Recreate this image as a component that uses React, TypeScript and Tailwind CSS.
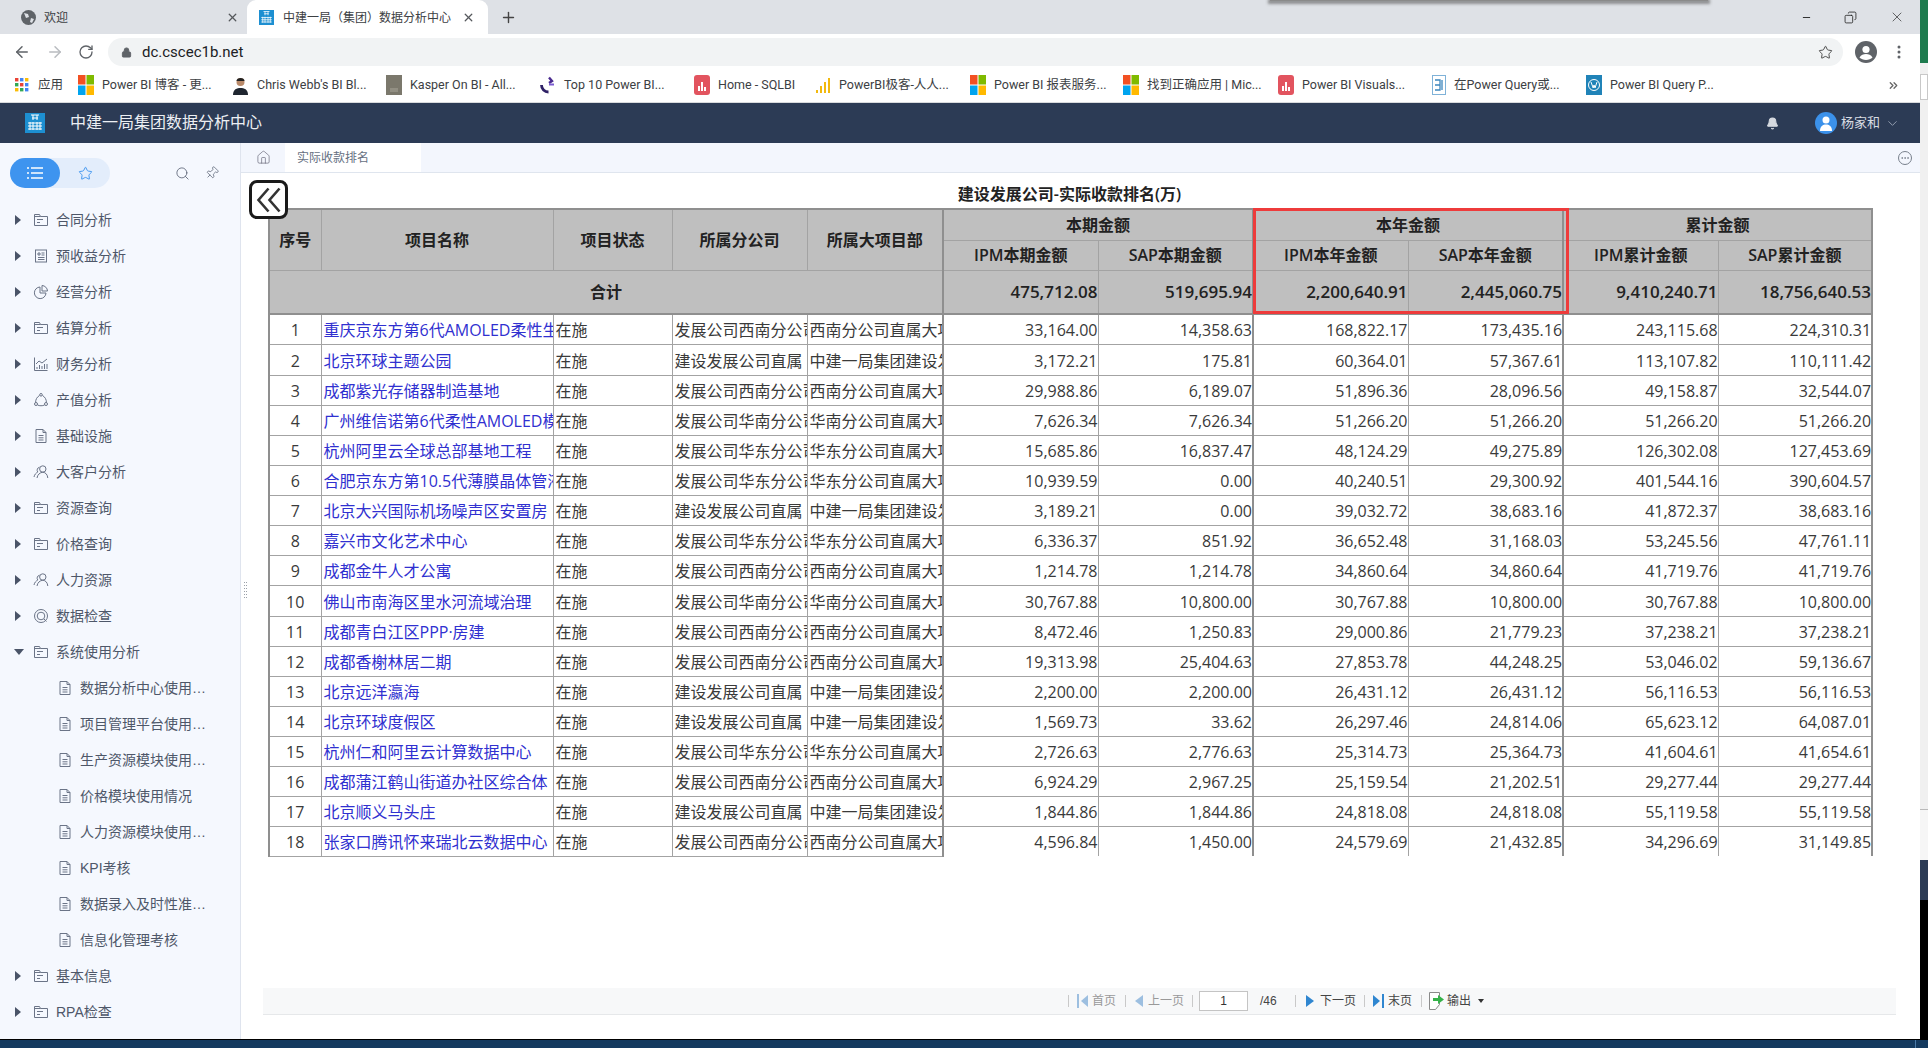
import React from 'react';
import { ArrowLeft, ArrowRight, RotateCw, Lock, Star, X, Plus, Minus, Bell, ChevronDown, Home, Search, Pin, ChevronsRight, Ellipsis, Copy } from 'lucide-react';

const Logo = ({ s = 16 }: { s?: number }) => (
  <svg width={s} height={s} viewBox="0 0 20 20" className="shrink-0">
    <rect width="20" height="20" fill="#1d8fd1" />
    <path d="M6 2h8M7 5h6M8 2v5M12 2v5M3 10h14M3 13h14M3 16h14M5 9v8M8 9v8M12 9v8M15 9v8" stroke="#fff" strokeWidth="1" fill="none" />
  </svg>
);
const Ms = () => (
  <svg width="16" height="20" viewBox="0 0 16 20" className="shrink-0">
    <rect width="7.5" height="9.5" fill="#f25022" />
    <rect x="8.5" width="7.5" height="9.5" fill="#7fba00" />
    <rect y="10.5" width="7.5" height="9.5" fill="#00a4ef" />
    <rect x="8.5" y="10.5" width="7.5" height="9.5" fill="#ffb900" />
  </svg>
);
const Red = () => (
  <svg width="16" height="20" viewBox="0 0 16 20" className="shrink-0">
    <rect width="16" height="20" rx="3" fill="#e2545f" />
    <path d="M4 11h2v5H4zM7 7h2v9H7zM10 12h2v4h-2z" fill="#fff" />
  </svg>
);
const Apps = () => (
  <svg width="14" height="14" viewBox="0 0 14 14" className="shrink-0">
    {[0, 5, 10].map((y, j) =>
      [0, 5, 10].map((x, i) => (
        <rect key={`${i}${j}`} x={x} y={y} width="3.4" height="3.4" fill={['#ea4335', '#4285f4', '#fbbc05', '#34a853', '#ea4335', '#4285f4', '#fbbc05', '#34a853', '#4285f4'][i + j * 3]} />
      ))
    )}
  </svg>
);
const Person = () => (
  <svg width="17" height="20" viewBox="0 0 17 20" className="shrink-0">
    <circle cx="8.5" cy="7" r="4" fill="#b98a6a" />
    <path d="M4.5 6c0-4 8-4 8 0z" fill="#222" />
    <path d="M1 20c0-6 4-7 7.500-7s7.500 1 7.500 7z" fill="#1f2630" />
  </svg>
);
const Kasper = () => (
  <svg width="16" height="20" viewBox="0 0 16 20" className="shrink-0">
    <rect width="16" height="20" fill="#7b786c" />
    <path d="M4 14h8M4 16h8" stroke="#aaa69a" />
  </svg>
);
const Top10 = () => (
  <svg width="16" height="18" viewBox="0 0 16 18" className="shrink-0" fill="none">
    <path d="M9 1.500 12 5 9 7" stroke="#4a2b8f" strokeWidth="2.400" />
    <path d="M1.500 9c0 4 3 7 7 7" stroke="#2f2166" strokeWidth="2.800" />
    <path d="M14 8.500h-5" stroke="#7a5bd0" strokeWidth="2" />
  </svg>
);
const Pbi = () => (
  <svg width="15" height="16" viewBox="0 0 15 16" className="shrink-0">
    <path d="M0 13h2v3H0zM4 9h2v7H4zM8 5h2v11H8zM12 1h2v15h-2z" fill="#f2b90f" />
  </svg>
);
const E3 = () => (
  <svg width="14" height="20" viewBox="0 0 14 20" className="shrink-0" fill="none">
    <rect x=".5" y=".5" width="13" height="19" fill="#fff" stroke="#7fb2d8" />
    <path d="M3 5h5v10H3M3 10h5M10 5v10" stroke="#3c86bd" strokeWidth="1.300" />
  </svg>
);
const Wp = () => (
  <svg width="16" height="20" viewBox="0 0 16 20" className="shrink-0">
    <rect width="16" height="20" fill="#2083b8" />
    <circle cx="8" cy="10" r="5.500" fill="none" stroke="#fff" />
    <path d="M5 7l2.200 6L8 10l1 3 2-6" fill="none" stroke="#fff" />
  </svg>
);

const marks = [
  { w: 'w-[63px]', icon: <Apps />, label: '应用', gap: 'gap-[9px]' },
  { w: 'w-[154px]', icon: <Ms />, label: 'Power BI 博客 - 更...' },
  { w: 'w-[154px]', icon: <Person />, label: "Chris Webb's BI Bl..." },
  { w: 'w-[154px]', icon: <Kasper />, label: 'Kasper On BI - All...' },
  { w: 'w-[154px]', icon: <Top10 />, label: 'Top 10 Power BI...' },
  { w: 'w-[122px]', icon: <Red />, label: 'Home - SQLBI' },
  { w: 'w-[154px]', icon: <Pbi />, label: 'PowerBI极客-人人...' },
  { w: 'w-[153px]', icon: <Ms />, label: 'Power BI 报表服务...' },
  { w: 'w-[155px]', icon: <Ms />, label: '找到正确应用 | Mic...' },
  { w: 'w-[154px]', icon: <Red />, label: 'Power BI Visuals...' },
  { w: 'w-[154px]', icon: <E3 />, label: '在Power Query或...' },
  { w: 'w-[154px]', icon: <Wp />, label: 'Power BI Query P...' },
];

const S = { width: 16, height: 16, viewBox: '0 0 16 16', fill: 'none', stroke: '#6b7487', strokeWidth: 1, className: 'shrink-0' };
const Folder = () => (
  <svg {...S}><path d="M1.500 13.500v-11h5l1 2h7v9z M1.500 4.500h6" /><path d="M4 7.500h6M4 10.500h3" /></svg>
);
const Report = () => (
  <svg {...S}><rect x="2.500" y="2" width="11" height="12" /><path d="M5 5h2v2H5zM8.500 5h3M8.500 7h3M5 9.500h6.500M5 11.500h6.500" /></svg>
);
const PieI = () => (
  <svg {...S}><path d="M7 3a5.800 5.800 0 1 0 6 6H7z" /><path d="M9 1.500a5.800 5.800 0 0 1 5.500 5.500H9z" /></svg>
);
const ChartI = () => (
  <svg {...S}><path d="M1.500 1.500v13h13" /><path d="M3 8l3-3 3 2 5-4M4 13v-2M6.500 13v-4M9 13v-3M11.500 13v-5M14 13V8" /></svg>
);
const Value = () => (
  <svg {...S}><circle cx="8" cy="2.800" r="1.300" /><circle cx="3" cy="12" r="1.500" /><circle cx="13" cy="12" r="1.500" /><path d="M6.500 3.500C4 5 2.500 7.500 2.600 10.500M9.500 3.500c2.500 1.500 4 4 3.900 7M4.500 13c2 1 5 1 7 0" /></svg>
);
const Doc = () => (
  <svg {...S}><path d="M3 1.500h7l3 3v10H3zM10 1.500v3h3" /><path d="M5.500 7.500h5M5.500 9.800h5M5.500 12h5" /></svg>
);
const Users = () => (
  <svg {...S}><circle cx="9.800" cy="5" r="3.200" /><path d="M4 14c.5-3.500 3-5.500 5.800-5.800 2.800.3 4.700 2.300 5 5.800" /><path d="M6.500 3.200A3 3 0 0 0 4.800 8C3 9 1.500 10.500 1 13" /></svg>
);
const Check = () => (
  <svg {...S}><circle cx="8" cy="8" r="6.500" /><circle cx="8" cy="8" r="3.800" /><path d="M11 11l2.500 2.500" /></svg>
);

const TriR = () => <span className="w-0 h-0 border-y-[5px] border-y-transparent border-l-[6px] border-l-[#4a5468] shrink-0" />;
const TriD = () => <span className="w-0 h-0 border-x-[5px] border-x-transparent border-t-[6px] border-t-[#4a5468] shrink-0 -ml-[1px]" />;

const topMenu: [React.ReactNode, string][] = [
  [<Folder />, '合同分析'], [<Report />, '预收益分析'], [<PieI />, '经营分析'], [<Folder />, '结算分析'],
  [<ChartI />, '财务分析'], [<Value />, '产值分析'], [<Doc />, '基础设施'], [<Users />, '大客户分析'],
  [<Folder />, '资源查询'], [<Folder />, '价格查询'], [<Users />, '人力资源'], [<Check />, '数据检查'],
];
const kids = ['数据分析中心使用情况', '项目管理平台使用情况', '生产资源模块使用情况', '价格模块使用情况', '人力资源模块使用情况', 'KPI考核', '数据录入及时性准确性', '信息化管理考核'];

const MenuRow = ({ open, icon, label }: { open?: boolean; icon: React.ReactNode; label: string }) => (
  <div className="h-9 flex items-center text-[14px] text-[#4e5769]">
    <span className="w-[33px] pl-[15px] flex items-center">{open ? <TriD /> : <TriR />}</span>
    {icon}
    <span className="ml-[7px]">{label}</span>
  </div>
);

const W = '发展公司西南分公司', WD = '西南分公司直属大项目部';
const E = '发展公司华东分公司', ED = '华东分公司直属大项目部';
const N = '发展公司华南分公司', ND = '华南分公司直属大项目部';
const B = '建设发展公司直属', BD = '中建一局集团建设发展';
const rows: string[][] = [
  ['重庆京东方第6代AMOLED柔性生产线', W, WD, '33,164.00', '14,358.63', '168,822.17', '173,435.16', '243,115.68', '224,310.31'],
  ['北京环球主题公园', B, BD, '3,172.21', '175.81', '60,364.01', '57,367.61', '113,107.82', '110,111.42'],
  ['成都紫光存储器制造基地', W, WD, '29,988.86', '6,189.07', '51,896.36', '28,096.56', '49,158.87', '32,544.07'],
  ['广州维信诺第6代柔性AMOLED模组', N, ND, '7,626.34', '7,626.34', '51,266.20', '51,266.20', '51,266.20', '51,266.20'],
  ['杭州阿里云全球总部基地工程', E, ED, '15,685.86', '16,837.47', '48,124.29', '49,275.89', '126,302.08', '127,453.69'],
  ['合肥京东方第10.5代薄膜晶体管液晶', E, ED, '10,939.59', '0.00', '40,240.51', '29,300.92', '401,544.16', '390,604.57'],
  ['北京大兴国际机场噪声区安置房', B, BD, '3,189.21', '0.00', '39,032.72', '38,683.16', '41,872.37', '38,683.16'],
  ['嘉兴市文化艺术中心', E, ED, '6,336.37', '851.92', '36,652.48', '31,168.03', '53,245.56', '47,761.11'],
  ['成都金牛人才公寓', W, WD, '1,214.78', '1,214.78', '34,860.64', '34,860.64', '41,719.76', '41,719.76'],
  ['佛山市南海区里水河流域治理', N, ND, '30,767.88', '10,800.00', '30,767.88', '10,800.00', '30,767.88', '10,800.00'],
  ['成都青白江区PPP·房建', W, WD, '8,472.46', '1,250.83', '29,000.86', '21,779.23', '37,238.21', '37,238.21'],
  ['成都香榭林居二期', W, WD, '19,313.98', '25,404.63', '27,853.78', '44,248.25', '53,046.02', '59,136.67'],
  ['北京远洋瀛海', B, BD, '2,200.00', '2,200.00', '26,431.12', '26,431.12', '56,116.53', '56,116.53'],
  ['北京环球度假区', B, BD, '1,569.73', '33.62', '26,297.46', '24,814.06', '65,623.12', '64,087.01'],
  ['杭州仁和阿里云计算数据中心', E, ED, '2,726.63', '2,776.63', '25,314.73', '25,364.73', '41,604.61', '41,654.61'],
  ['成都蒲江鹤山街道办社区综合体', W, WD, '6,924.29', '2,967.25', '25,159.54', '21,202.51', '29,277.44', '29,277.44'],
  ['北京顺义马头庄', B, BD, '1,844.86', '1,844.86', '24,818.08', '24,818.08', '55,119.58', '55,119.58'],
  ['张家口腾讯怀来瑞北云数据中心', W, WD, '4,596.84', '1,450.00', '24,579.69', '21,432.85', '34,296.69', '31,149.85'],
];

const heavy = 'border-l-2 border-l-[#8f8f8f]';
const line = 'border border-[#a3a3a3]';
const th = `${line} p-0 font-semibold text-[16px] text-[#222] text-center align-middle`;
const td = `${line} p-0 pt-[2px] overflow-hidden whitespace-nowrap`;
const num = `${td} text-right border-b-0`;

const Sep = ({ className = '' }: { className?: string }) => <span className={`w-px h-[12px] bg-[#c9c9c9] ${className}`} />;
const First = ({ dim }: { dim?: boolean }) => (
  <svg width="11" height="14" viewBox="0 0 11 14"><path d="M0 0h2v14H0z" fill={dim ? '#9dbfe0' : '#2f86d0'} /><path d="M11 1v12L4 7z" fill={dim ? '#9dbfe0' : '#2f86d0'} /></svg>
);
const Prev = () => <svg width="8" height="14" viewBox="0 0 8 14"><path d="M8 1v12L0 7z" fill="#9dbfe0" /></svg>;
const Next = () => <svg width="8" height="14" viewBox="0 0 8 14"><path d="M0 1v12l8-6z" fill="#2f86d0" /></svg>;
const Last = () => <svg width="11" height="14" viewBox="0 0 11 14"><path d="M9 0h2v14H9z" fill="#2f86d0" /><path d="M0 1v12l7-6z" fill="#2f86d0" /></svg>;
const Export = () => (
  <svg width="16" height="18" viewBox="0 0 16 18" fill="none"><path d="M.5.500h10v12l-4 5h-6z" fill="#fff" stroke="#8a8a8a" /><path d="M4 6h5V3l6 4.500L9 12V9H4z" fill="#35b24a" /></svg>
);

export default function App() {
  return (
    <div className="w-[1928px] h-[1048px] flex flex-col overflow-hidden bg-white [font-family:'Liberation_Sans','Noto_Sans_CJK_SC',sans-serif]">
      <div className="flex h-[1039px]">
        <div className="w-[1920px] flex flex-col">
          {/* tab strip */}
          <div className="h-[34px] bg-[#dee1e6] flex items-end relative text-[12px] text-[#3c4043]">
            <div className="w-[247px] h-[34px] flex items-center pl-[21px] pt-[1px]">
              <svg width="15" height="15" viewBox="0 0 15 15"><circle cx="7.500" cy="7.500" r="7.500" fill="#5f6368" /><path d="M3 3l4 1 1 3-3 1zM10 8l3 1-2 4-2-1z" fill="#dee1e6" /></svg>
              <span className="ml-[8px]">欢迎</span>
              <X size={13} strokeWidth={2.4} className="ml-auto mr-[8px] text-[#55585c]" />
            </div>
            <div className="w-[241px] h-[34px] bg-white rounded-t-[9px] flex items-center pl-[12px] pt-[1px]">
              <Logo s={15} />
              <span className="ml-[9px] whitespace-nowrap">中建一局（集团）数据分析中心</span>
              <X size={13} strokeWidth={2.4} className="ml-auto mr-[13px] text-[#55585c]" />
            </div>
            <div className="h-[34px] flex items-center ml-[12px]"><Plus size={17} strokeWidth={2} className="text-[#444]" /></div>
            <div className="ml-auto h-[34px] flex items-center pr-[15px] gap-[32px]">
              <Minus size={11} className="text-[#222]" />
              <Copy size={13} className="text-[#222] -scale-x-100" strokeWidth={1.5} />
              <X size={16} strokeWidth={1} className="text-[#222]" />
            </div>
            <div className="absolute left-[1270px] top-0 w-[438px] h-[1px] shadow-[0_1px_3px_2px_rgba(90,90,90,0.6)] bg-[#8a8a8a]" />
          </div>
          {/* toolbar */}
          <div className="h-[32px] flex items-end bg-white">
            <div className="w-[108px] h-[28px] flex items-center pl-[13px] gap-[10px] text-[#5f6368]">
              <ArrowLeft size={18} strokeWidth={2} />
              <ArrowRight size={18} strokeWidth={2} className="text-[#b9bcc0] ml-[5px]" />
              <RotateCw size={16} strokeWidth={2} className="ml-[4px]" />
            </div>
            <div className="w-[1735px] h-[28px] rounded-full bg-[#f1f3f4] flex items-center pl-[13px] pr-[10px]">
              <Lock size={11} fill="#5f6368" className="text-[#5f6368]" />
              <span className="ml-[10px] text-[15px] text-[#202124] [font-family:'Roboto',sans-serif]">dc.cscec1b.net</span>
              <Star size={15} strokeWidth={1.5} className="ml-auto text-[#444]" />
            </div>
            <div className="flex-1 h-[28px] flex items-center pl-[12px]">
              <svg width="22" height="22" viewBox="0 0 22 22" className="shrink-0"><circle cx="11" cy="11" r="11" fill="#5f6368" /><circle cx="11" cy="8.500" r="3.600" fill="#fff" /><path d="M4.500 16.500c1.500-3 4-3.500 6.500-3.500s5 .5 6.500 3.500c-3 3.300-10 3.300-13 0z" fill="#fff" /></svg>
              <svg width="4" height="14" viewBox="0 0 4 14" className="ml-[20px] shrink-0"><circle cx="2" cy="2" r="1.500" fill="#5f6368" /><circle cx="2" cy="7" r="1.500" fill="#5f6368" /><circle cx="2" cy="12" r="1.500" fill="#5f6368" /></svg>
            </div>
          </div>
          {/* bookmarks */}
          <div className="h-[37px] pt-[2px] border-b border-[#d8dadd] flex items-center pl-[15px] text-[12.500px] text-[#3c4043] bg-white [font-family:'Roboto','Noto_Sans_CJK_SC',sans-serif]">
            {marks.map((m) => (
              <div key={m.label + m.w} className={`${m.w} flex items-center ${m.gap ?? 'gap-[8px]'} whitespace-nowrap overflow-hidden`}>
                {m.icon}
                <span>{m.label}</span>
              </div>
            ))}
            <ChevronsRight size={13} strokeWidth={2.4} className="ml-auto mr-[20px] text-[#666]" />
          </div>
          {/* app header */}
          <div className="h-[40px] bg-[#2c3b55] flex items-center pl-[25px] pr-[20px] text-[#eceff3]">
            <Logo s={20} />
            <span className="ml-[25px] text-[16px]">中建一局集团数据分析中心</span>
            <Bell size={13} fill="#d5d9df" className="ml-auto text-[#d5d9df]" />
            <span className="ml-[36px] w-[22px] h-[22px] rounded-full bg-[#3b91ea] flex items-center justify-center overflow-hidden">
              <svg width="14" height="16" viewBox="0 0 14 16"><circle cx="7" cy="5" r="3.500" fill="#fff" /><path d="M1 16c0-5 3-6.500 6-6.500s6 1.500 6 6.500z" fill="#fff" /></svg>
            </span>
            <span className="ml-[4px] text-[13px] text-[#d7dbe2]">杨家和</span>
            <ChevronDown size={15} strokeWidth={1.5} className="ml-[5px] text-[#98a2b3]" />
          </div>
          {/* body */}
          <div className="flex-1 flex min-h-0">
            <aside className="w-[241px] shrink-0 bg-[#f5f8fe] border-r border-[#dfe4ee] pt-[15px]">
              <div className="h-[30px] flex items-center pl-[10px]">
                <div className="w-[100px] h-[30px] rounded-full bg-[#e3edfb] flex">
                  <span className="w-[50px] h-[30px] rounded-full bg-[#3e94ef] flex items-center justify-center">
                    <svg width="16" height="12" viewBox="0 0 16 12" stroke="#fff" strokeWidth="1.300"><path d="M0 1h2M4 1h12M0 6h2M4 6h12M0 11h2M4 11h12" /></svg>
                  </span>
                  <span className="w-[50px] flex items-center justify-center">
                    <Star size={15} strokeWidth={1.500} className="text-[#3e94ef]" />
                  </span>
                </div>
                <Search size={15} strokeWidth={1.300} className="ml-[65px] text-[#555e70]" />
                <Pin size={14} strokeWidth={1.200} className="ml-[15px] rotate-45 text-[#555e70]" />
              </div>
              <div className="mt-[14px]">
                {topMenu.map(([i, l]) => <MenuRow key={l} icon={i} label={l} />)}
                <MenuRow open icon={<Folder />} label="系统使用分析" />
                {kids.map((k) => (
                  <div key={k} className="h-9 flex items-center pl-[57px] text-[14px] text-[#4e5769]">
                    <Doc />
                    <span className="ml-[7px] w-[128px] truncate">{k}</span>
                  </div>
                ))}
                <MenuRow icon={<Folder />} label="基本信息" />
                <MenuRow icon={<Folder />} label="RPA检查" />
              </div>
            </aside>
            <main className="flex-1 flex flex-col relative min-w-0">
              <div className="h-[30px] shrink-0 bg-[#f3f6fd] border-b border-[#dfe5ee] flex items-stretch text-[12px] text-[#66707f]">
                <div className="w-[44px] flex items-center justify-center"><Home size={15} strokeWidth={1.1} className="text-[#667]" /></div>
                <div className="w-[136px] bg-white flex items-center pl-[12px]">实际收款排名</div>
                <div className="ml-auto mr-[8px] flex items-center">
                  <span className="w-[14px] h-[14px] rounded-full border border-[#78808c] flex items-center justify-center"><Ellipsis size={10} className="text-[#78808c]" /></span>
                </div>
              </div>
              <div className="pl-[27px] [font-family:'Open_Sans','Noto_Sans_CJK_SC',sans-serif]">
                <div className="w-[1603px] h-[35px] pt-[6px] flex items-center justify-center text-[16px] font-semibold text-[#222]">建设发展公司-实际收款排名(万)</div>
                <div className="relative w-[1603px]">
                  <table className="table-fixed border-collapse w-[1603px] text-[16px] text-[#3a3a3a] border-t-2 border-r-2 border-t-[#8f8f8f] border-r-[#8f8f8f]">
                    <colgroup>
                      <col className="w-[52px]" /><col className="w-[232px]" /><col className="w-[119px]" /><col className="w-[135px]" /><col className="w-[136px]" />
                      <col className="w-[155px]" /><col className="w-[155px]" /><col className="w-[155px]" /><col className="w-[155px]" /><col className="w-[155px]" /><col className="w-[154px]" />
                    </colgroup>
                    <thead className="bg-[#bfbfbf]">
                      <tr className="h-[31px]">
                        <th rowSpan={2} className={`${th} ${heavy}`}>序号</th>
                        <th rowSpan={2} className={th}>项目名称</th>
                        <th rowSpan={2} className={th}>项目状态</th>
                        <th rowSpan={2} className={th}>所属分公司</th>
                        <th rowSpan={2} className={th}>所属大项目部</th>
                        <th colSpan={2} className={`${th} ${heavy}`}>本期金额</th>
                        <th colSpan={2} className={`${th} ${heavy}`}>本年金额</th>
                        <th colSpan={2} className={`${th} ${heavy}`}>累计金额</th>
                      </tr>
                      <tr className="h-[30px]">
                        <th className={`${th} ${heavy}`}>IPM本期金额</th>
                        <th className={th}>SAP本期金额</th>
                        <th className={`${th} ${heavy}`}>IPM本年金额</th>
                        <th className={th}>SAP本年金额</th>
                        <th className={`${th} ${heavy}`}>IPM累计金额</th>
                        <th className={th}>SAP累计金额</th>
                      </tr>
                      <tr className="h-[44px]">
                        <th colSpan={5} className={`${th} font-bold ${heavy} border-b-2 border-b-[#8f8f8f]`}>合计</th>
                        {['475,712.08', '519,695.94', '2,200,640.91', '2,445,060.75', '9,410,240.71', '18,756,640.53'].map((v, i) => (
                          <th key={v} className={`${th} font-bold text-[17px]! text-right! border-b-2 border-b-[#8f8f8f] ${i % 2 === 0 ? heavy : ''}`}>{v}</th>
                        ))}
                      </tr>
                    </thead>
                    <tbody>
                      {rows.map((r, i) => (
                        <tr key={i} className={i === 1 || i === 9 ? 'h-[31px]' : 'h-[30px]'}>
                          <td className={`${td} ${heavy} text-center`}>{i + 1}</td>
                          <td className={`${td} pl-[2px] text-[#3030d0]`}>{r[0]}</td>
                          <td className={`${td} pl-[2px]`}>在施</td>
                          <td className={`${td} pl-[2px]`}>{r[1]}</td>
                          <td className={`${td} pl-[2px]`}>{r[2]}</td>
                          {r.slice(3).map((v, j) => (
                            <td key={j} className={`${num} ${j % 2 === 0 ? heavy : ''}`}>{v}</td>
                          ))}
                        </tr>
                      ))}
                    </tbody>
                  </table>
                  <div className="absolute left-[985px] top-0 w-[316px] h-[106px] border-[3px] border-[#ee3b3b] pointer-events-none" />
                  <div className="absolute -left-[19px] -top-[28px] w-[39px] h-[39px] rounded-[8px] border-[3px] border-[#1a1a1a] bg-white flex items-center justify-center">
                    <svg width="26" height="26" viewBox="0 0 26 26" fill="none" stroke="#333" strokeWidth="2.600"><path d="M12.500 1.500 2.500 13l10 11.500M23.500 1.500 13.500 13l10 11.500" /></svg>
                  </div>
                </div>
              </div>
              <div className="absolute left-[3px] top-[439px] grid grid-cols-2 gap-[1px]">
                {Array.from({ length: 12 }).map((_, i) => <span key={i} className="w-px h-px bg-[#9aa0a8] mb-[1px]" />)}
              </div>
              <div className="mt-auto mb-[24px] ml-[22px] w-[1633px] h-[27px] bg-[#f7f8f9] border-b border-[#e6e8ea] flex items-center pl-[805px] text-[12px] text-[#777]">
                <Sep />
                <span className="ml-[8px]"><First dim /></span>
                <span className="ml-[4px] text-[#999]">首页</span>
                <Sep className="ml-[9px]" />
                <span className="ml-[9px]"><Prev /></span>
                <span className="ml-[5px] text-[#999]">上一页</span>
                <Sep className="ml-[8px]" />
                <span className="ml-[6px] w-[49px] h-[20px] bg-white border border-[#c4c4c4] flex items-center justify-center text-[#333]">1</span>
                <span className="ml-[12px] w-[17px] text-[#444]">/46</span>
                <Sep className="ml-[18px]" />
                <span className="ml-[10px]"><Next /></span>
                <span className="ml-[6px] text-[#444]">下一页</span>
                <Sep className="ml-[8px]" />
                <span className="ml-[8px]"><Last /></span>
                <span className="ml-[4px] text-[#444]">末页</span>
                <Sep className="ml-[9px]" />
                <span className="ml-[7px]"><Export /></span>
                <span className="ml-[2px] text-[#444]">输出</span>
                <span className="ml-[7px] w-0 h-0 border-x-[3px] border-x-transparent border-t-[4px] border-t-[#333]" />
              </div>
            </main>
          </div>
        </div>
        {/* sliver of the next window */}
        <div className="w-[8px] flex flex-col">
          <div className="h-[63px] bg-[#1e7b4e]" />
          <div className="h-[747px] bg-[#f0f0f0] border-b border-[#b9b9b9] pt-[11px]">
            <div className="h-[26px] bg-white border border-[#c8c8c8]" />
          </div>
          <div className="h-[50px] bg-[#f6f6f6]" />
          <div className="h-[40px] bg-[#2c3b55]" />
          <div className="flex-1 bg-black" />
        </div>
      </div>
      <div className="h-[9px] bg-[#143a5f] border-t border-black flex text-white text-[12px] relative overflow-hidden">
        <div className="absolute left-[1534px] top-[5px]">2017</div>
        <div className="absolute left-[1814px] top-[5px]">18:01</div>
        <div className="absolute left-[1915px] top-0 w-px h-[9px] bg-[#4a7aa8]" />
      </div>
    </div>
  );
}
